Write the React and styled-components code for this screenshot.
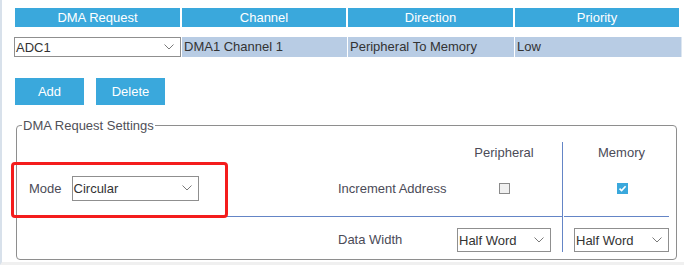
import React from 'react';
import styled, { createGlobalStyle } from 'styled-components';

const GlobalStyle = createGlobalStyle`
  html, body {
    margin: 0;
    padding: 0;
    background: #fff;
  }
  body {
    font-family: "Liberation Sans", Arial, sans-serif;
    font-size: 13px;
    color: #333;
  }
`;

const Page = styled.div`
  box-sizing: border-box;
  width: 684px;
  height: 265px;
  border-left: 2px solid #d8e1eb;
  border-bottom: 3px solid #f0f0f0;
  padding-top: 8px;
  overflow: hidden;
`;

const HeaderRow = styled.div`
  display: grid;
  grid-template-columns: 165px 164px 165px 164px;
  column-gap: 2px;
  margin-left: 13px;
`;

const HeaderCell = styled.div`
  height: 19px;
  line-height: 19px;
  background: #3aa8dc;
  color: #fff;
  text-align: center;
`;

const DataRow = styled.div`
  display: grid;
  grid-template-columns: 167px 165px 166px 167px;
  column-gap: 1px;
  margin: 10px 0 0 12px;
`;

const DataCell = styled.div`
  box-sizing: border-box;
  height: 20px;
  line-height: 20px;
  padding-left: 2px;
  background: #b8cce4;
  color: #333;
  border-right: ${p => (p.$last ? '1px solid #dde6f0' : 'none')};
`;

const SelectBox = styled.div`
  box-sizing: border-box;
  width: ${p => p.$w}px;
  height: ${p => p.$h}px;
  border: 1px solid #8f8f8f;
  background: #fff;
  display: flex;
  align-items: center;
  justify-content: space-between;
  padding: 0 6px 0 1px;
  color: #333;
  white-space: nowrap;
`;

const ButtonRow = styled.div`
  display: flex;
  gap: 12px;
  margin: 21px 0 0 13px;
`;

const Button = styled.button`
  width: 69px;
  height: 27px;
  padding: 0;
  border: none;
  background: #3aa8dc;
  color: #fff;
  font-family: inherit;
  font-size: 13px;
`;

const Fieldset = styled.fieldset`
  box-sizing: border-box;
  width: 661px;
  min-width: 0;
  margin: 13px 0 0 14px;
  padding: 9px 6px 7px 0;
  border: 1px solid #8e8e8e;
  border-radius: 4px;
`;

const Legend = styled.legend`
  margin-left: 5px;
  padding: 0 1px;
  line-height: 15px;
  color: #505058;
`;

const SettingsGrid = styled.div`
  display: grid;
  grid-template-columns: 321px 119px 106px 106px;
  grid-template-rows: 18px 57px 35px;
`;

const Cell = styled.div`
  box-sizing: border-box;
  display: flex;
  align-items: ${p => p.$align || 'center'};
  justify-content: ${p => p.$justify || 'flex-start'};
  padding: ${p => p.$pad || '0'};
  margin-left: ${p => (p.$gap ? '1px' : '0')};
  border-right: ${p => (p.$divider ? '1px solid #6485c6' : 'none')};
  border-bottom: ${p => (p.$rule ? '1px solid #6485c6' : 'none')};
  color: #4b4b57;
`;

const ColHead = styled.div`
  padding-top: 3px;
  line-height: 15px;
  color: #4b4b57;
`;

const Label = styled.span`
  line-height: ${p => p.$lh || 15}px;
  color: #4b4b57;
`;

const ModeField = styled.div`
  position: relative;
  display: flex;
  align-items: center;
  gap: 10px;

  &::after {
    content: '';
    position: absolute;
    top: -14px;
    left: -18px;
    right: -29px;
    bottom: -17px;
    border: 3px solid #f41c1c;
    border-radius: 4px;
    pointer-events: none;
  }
`;

const Check = styled.span`
  box-sizing: border-box;
  width: 11px;
  height: 11px;
  display: inline-flex;
  align-items: center;
  justify-content: center;
  background: ${p => (p.$on ? '#3aa8dc' : '#f0f0f0')};
  border: ${p => (p.$on ? 'none' : '1px solid #8a8a8a')};
`;

function Chevron() {
  return (
    <svg width="10" height="6" viewBox="0 0 10 6">
      <path d="M0.5 0.5 L5 5 L9.5 0.5" fill="none" stroke="#7a7a7a" strokeWidth="1" />
    </svg>
  );
}

function Select({ value, w, h }) {
  return (
    <SelectBox $w={w} $h={h}>
      <span>{value}</span>
      <Chevron />
    </SelectBox>
  );
}

function Checkbox({ on }) {
  return (
    <Check $on={on}>
      {on && (
        <svg width="9" height="9" viewBox="0 0 9 9">
          <path d="M1.5 4.6 L3.6 6.6 L7.6 2.2" fill="none" stroke="#fff" strokeWidth="1.6" />
        </svg>
      )}
    </Check>
  );
}

export default function App() {
  return (
    <>
      <GlobalStyle />
      <Page>
        <HeaderRow>
          <HeaderCell>DMA Request</HeaderCell>
          <HeaderCell>Channel</HeaderCell>
          <HeaderCell>Direction</HeaderCell>
          <HeaderCell>Priority</HeaderCell>
        </HeaderRow>

        <DataRow>
          <Select value="ADC1" w={167} h={20} />
          <DataCell>DMA1 Channel 1</DataCell>
          <DataCell>Peripheral To Memory</DataCell>
          <DataCell $last>Low</DataCell>
        </DataRow>

        <ButtonRow>
          <Button>Add</Button>
          <Button>Delete</Button>
        </ButtonRow>

        <Fieldset>
          <Legend>DMA Request Settings</Legend>
          <SettingsGrid>
            <Cell />
            <Cell />
            <Cell $divider $justify="center" $pad="0 11px 0 0" $align="flex-start">
              <ColHead>Peripheral</ColHead>
            </Cell>
            <Cell $justify="center" $pad="0 0 0 11px" $align="flex-start">
              <ColHead>Memory</ColHead>
            </Cell>

            <Cell $rule $pad="0 0 0 12px">
              <ModeField>
                <Label>Mode</Label>
                <Select value="Circular" w={127} h={25} />
              </ModeField>
            </Cell>
            <Cell $rule>
              <Label>Increment Address</Label>
            </Cell>
            <Cell $rule $divider $justify="center" $pad="0 11px 0 0">
              <Checkbox />
            </Cell>
            <Cell $rule $gap $justify="center" $pad="0 0 0 11px">
              <Checkbox on />
            </Cell>

            <Cell />
            <Cell $align="flex-end">
              <Label $lh={24}>Data Width</Label>
            </Cell>
            <Cell $divider $align="flex-end" $pad="0 11px 0 0">
              <Select value="Half Word" w={94} h={24} />
            </Cell>
            <Cell $align="flex-end" $pad="0 0 0 11px">
              <Select value="Half Word" w={95} h={24} />
            </Cell>
          </SettingsGrid>
        </Fieldset>
      </Page>
    </>
  );
}
